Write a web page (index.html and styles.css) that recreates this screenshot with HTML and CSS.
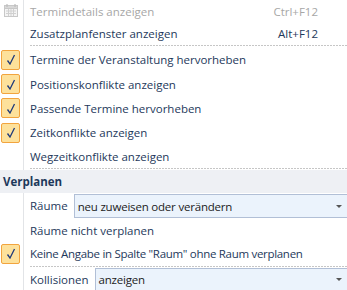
FILE: index.html
```html
<!DOCTYPE html>
<html lang="de">
<head>
<meta charset="utf-8">
<link rel="stylesheet" href="styles.css">
</head>
<body>
<div class="menu">
  <div class="item disabled h22">
    <div class="gutter">
      <svg class="cal" width="14" height="14" viewBox="0 0 14 14">
        <rect x="0.5" y="2.5" width="13" height="11" fill="#f4f4f4" stroke="#c8c8c8"/>
        <rect x="0.5" y="2.5" width="13" height="3" fill="#d8d8d8" stroke="#c8c8c8"/>
        <path d="M3 1v3M11 1v3" stroke="#bdbdbd" stroke-width="1.2"/>
        <path d="M2 8h10M2 10.5h10M4.5 6v7M7 6v7M9.5 6v7" stroke="#d0d0d0" stroke-width="1"/>
      </svg>
    </div>
    <span class="label">Termindetails anzeigen</span>
    <span class="key">Ctrl+F12</span>
  </div>
  <div class="item h22">
    <div class="gutter"></div>
    <span class="label">Zusatzplanfenster anzeigen</span>
    <span class="key">Alt+F12</span>
  </div>
  <div class="sep"><div class="gutter"></div><div class="line"></div></div>
  <div class="item h25">
    <div class="gutter"><span class="check"><svg width="10" height="11" viewBox="0 0 10 11"><path d="M1.5 6.5 L4 10 L8.5 1" fill="none" stroke="#1f3a7a" stroke-width="1.3"/></svg></span></div>
    <span class="label">Termine der Veranstaltung hervorheben</span>
  </div>
  <div class="item h24">
    <div class="gutter"><span class="check"><svg width="10" height="11" viewBox="0 0 10 11"><path d="M1.5 6.5 L4 10 L8.5 1" fill="none" stroke="#1f3a7a" stroke-width="1.3"/></svg></span></div>
    <span class="label">Positionskonflikte anzeigen</span>
  </div>
  <div class="item h24">
    <div class="gutter"><span class="check"><svg width="10" height="11" viewBox="0 0 10 11"><path d="M1.5 6.5 L4 10 L8.5 1" fill="none" stroke="#1f3a7a" stroke-width="1.3"/></svg></span></div>
    <span class="label">Passende Termine hervorheben</span>
  </div>
  <div class="item h25">
    <div class="gutter"><span class="check"><svg width="10" height="11" viewBox="0 0 10 11"><path d="M1.5 6.5 L4 10 L8.5 1" fill="none" stroke="#1f3a7a" stroke-width="1.3"/></svg></span></div>
    <span class="label">Zeitkonflikte anzeigen</span>
  </div>
  <div class="item h22">
    <div class="gutter"></div>
    <span class="label">Wegzeitkonflikte anzeigen</span>
  </div>
  <div class="sep"><div class="gutter"></div><div class="line"></div></div>
  <div class="header">Verplanen</div>
  <div class="item h25">
    <div class="gutter"></div>
    <span class="label fixed">Räume</span>
    <div class="combo c1"><span class="ctext">neu zuweisen oder verändern</span><span class="arrow"></span></div>
  </div>
  <div class="item h24">
    <div class="gutter"></div>
    <span class="label">Räume nicht verplanen</span>
  </div>
  <div class="item h23">
    <div class="gutter"><span class="check"><svg width="10" height="11" viewBox="0 0 10 11"><path d="M1.5 6.5 L4 10 L8.5 1" fill="none" stroke="#1f3a7a" stroke-width="1.3"/></svg></span></div>
    <span class="label tight">Keine Angabe in Spalte "Raum" ohne Raum verplanen</span>
  </div>
  <div class="sep"><div class="gutter"></div><div class="line"></div></div>
  <div class="item h22">
    <div class="gutter"></div>
    <span class="label fixed">Kollisionen</span>
    <div class="combo c2"><span class="ctext">anzeigen</span><span class="arrow"></span></div>
  </div>
</div>
</body>
</html>
```
FILE: styles.css
```css
html, body {
  margin: 0;
  padding: 0;
  background: #ffffff;
}
body {
  width: 347px;
  height: 290px;
  overflow: hidden;
  font-family: "Open Sans", "Noto Sans", sans-serif;
  font-size: 11.5px;
  color: #1e395b;
}
.menu {
  display: flex;
  flex-direction: column;
  width: 347px;
}
.item {
  display: flex;
  align-items: center;
}
.h22 { height: 22px; }
.h23 { height: 23px; }
.h24 { height: 24px; }
.h25 { height: 25px; }
.gutter {
  width: 23px;
  height: 100%;
  border-right: 1px solid #e2e4e7;
  box-sizing: content-box;
  display: flex;
  align-items: center;
  justify-content: flex-start;
  flex: none;
}
.label {
  padding-left: 6px;
  white-space: nowrap;
  flex: 1;
}
.label.fixed {
  flex: none;
  padding-right: 6px;
}
.tight {
  letter-spacing: -0.3px;
}
.key {
  padding-right: 29px;
  white-space: nowrap;
}
.disabled {
  color: #a7a7a7;
}
.cal {
  margin-left: 4px;
  margin-top: -2px;
}
.check {
  margin-left: 1px;
  width: 17px;
  height: 18px;
  border: 1px solid #f2a43e;
  border-radius: 2px;
  background: #fde19b;
  display: flex;
  align-items: center;
  justify-content: center;
}
.sep {
  display: flex;
  height: 3px;
}
.sep .gutter {
  height: 3px;
}
.sep .line {
  flex: 1;
  margin-left: 6px;
  margin-top: 1px;
  height: 1px;
  background: repeating-linear-gradient(to right, #c6c6c6 0 2px, transparent 2px 3px);
}
.header {
  height: 23px;
  background: #eef0f4;
  font-weight: bold;
  padding-left: 3px;
  display: flex;
  align-items: center;
}
.combo {
  flex: 1;
  align-self: stretch;
  margin-top: 1px;
  background: #ebf3fc;
  border: 1px solid #b1bfd6;
  border-right: none;
  display: flex;
  align-items: center;
  justify-content: space-between;
  padding-left: 3px;
  color: #1b1b1b;
}
.ctext {
  letter-spacing: -0.2px;
}
.c2 {
  margin-top: 0;
  border-bottom: none;
}
.arrow {
  width: 0;
  height: 0;
  border-left: 3px solid transparent;
  border-right: 3px solid transparent;
  border-top: 3px solid #555;
  margin-right: 5px;
}
```
